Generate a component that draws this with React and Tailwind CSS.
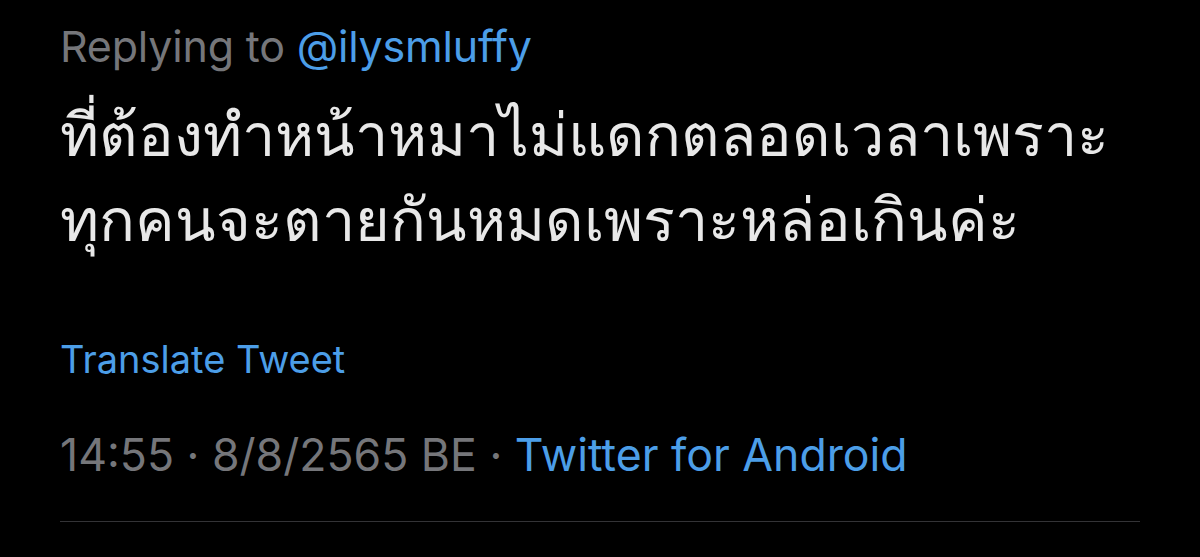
import React from "react";

const App = () => {
  return (
    <div className="w-[1200px] h-[557px] bg-black overflow-hidden font-['Inter','Noto_Sans',sans-serif]">
      <div className="pl-[60px] pr-[60px] pt-[20px]">
        <p className="text-[43px] leading-[52px] tracking-[-0.2px] text-[#75767a]">
          Replying to <span className="text-[#4c9ee8]">@ilysmluffy</span>
        </p>
        <p className="mt-[20px] text-[59.4px] leading-[85px] text-[#e8e8e8] whitespace-nowrap">
          ที่ต้องทำหน้าหมาไม่แดกตลอดเวลาเพราะ
          <br />
          ทุกคนจะตายกันหมดเพราะหล่อเกินค่ะ
        </p>
        <p className="mt-[74px] text-[38px] leading-[46px] text-[#4c9ee8]">
          Translate Tweet
        </p>
        <p className="mt-[46px] text-[44.6px] leading-[54px] text-[#75767a]">
          14:55 · 8/8/2565 BE · <span className="text-[#4c9ee8]">Twitter for Android</span>
        </p>
        <div className="mt-[39px] h-px bg-[#333336]" />
      </div>
    </div>
  );
};

export default App;
